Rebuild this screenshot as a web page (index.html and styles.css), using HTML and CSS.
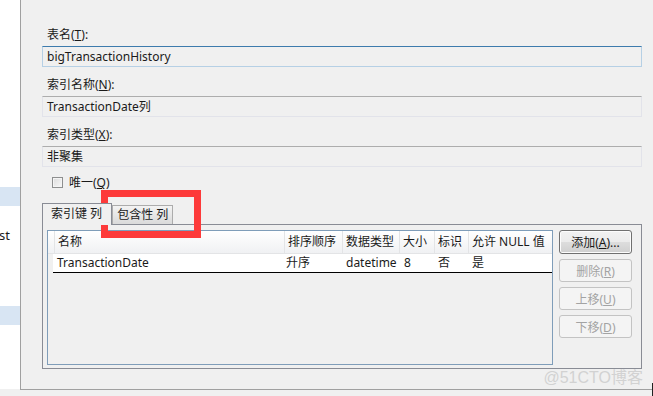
FILE: index.html
```html
<!DOCTYPE html>
<html lang="zh">
<head>
<meta charset="utf-8">
<title>索引属性</title>
<link rel="stylesheet" href="styles.css">
</head>
<body>
<div class="window">
  <div class="top">
    <aside class="side">
      <div class="side-hl hl1"></div>
      <div class="side-text">st</div>
      <div class="side-hl hl2"></div>
    </aside>
    <main class="main">
      <div class="label">表名(<u>T</u>):</div>
      <div class="field focus">bigTransactionHistory</div>
      <div class="label">索引名称(<u>N</u>):</div>
      <div class="field">TransactionDate列</div>
      <div class="label">索引类型(<u>X</u>):</div>
      <div class="field">非聚集</div>
      <div class="check-row"><span class="checkbox"></span><span>唯一(<u>Q</u>)</span></div>
      <div class="tabs">
        <div class="tab-strip">
          <div class="tab active">索引键 列</div>
          <div class="tab">包含性 列</div>
        </div>
        <div class="tab-panel">
          <div class="list">
            <div class="list-head">
              <div class="hcell c0"></div>
              <div class="hcell c1">名称</div>
              <div class="hcell c2">排序顺序</div>
              <div class="hcell c3">数据类型</div>
              <div class="hcell c4">大小</div>
              <div class="hcell c5">标识</div>
              <div class="hcell c6">允许 NULL 值</div>
            </div>
            <div class="list-row">
              <div class="cell c1">TransactionDate</div>
              <div class="cell c2">升序</div>
              <div class="cell c3">datetime</div>
              <div class="cell c4">8</div>
              <div class="cell c5">否</div>
              <div class="cell c6">是</div>
            </div>
          </div>
          <div class="buttons">
            <button class="btn">添加(<u>A</u>)...</button>
            <button class="btn disabled">删除(<u>R</u>)</button>
            <button class="btn disabled">上移(<u>U</u>)</button>
            <button class="btn disabled">下移(<u>D</u>)</button>
          </div>
        </div>
      </div>
      <div class="watermark">@51CTO博客</div>
    </main>
  </div>
  <div class="footer"></div>
  <div class="highlight-box"></div>
  <div class="edge"></div>
</div>
</body>
</html>
```

FILE: styles.css
```css
* { box-sizing: border-box; }
html, body { margin: 0; padding: 0; }
body {
  width: 653px;
  height: 396px;
  overflow: hidden;
  background: #f0f0f0;
  font-family: "Noto Sans", "Noto Sans CJK SC", sans-serif;
  font-size: 12px;
  color: #1a1a1a;
}
u { text-decoration: underline; text-underline-offset: 1px; }
.window { position: relative; width: 653px; height: 396px; display: flex; flex-direction: column; }
.top { display: flex; height: 389px; }
.side {
  width: 21px;
  background: #fff;
  border-right: 1px solid #a0a0a0;
  padding-top: 187px;
  overflow: hidden;
}
.side-hl { height: 19px; background: #d8e5f3; }
.side-text { height: 100px; padding-top: 21px; line-height: 16px; font-size: 13px; margin-left: -1px; }
.main {
  flex: 1;
  padding: 25px 11px 0 21px;
  display: flex;
  flex-direction: column;
}
.label { height: 20px; line-height: 20px; padding-left: 5px; margin-bottom: 1px; }
.field {
  height: 21px;
  line-height: 19px;
  padding-left: 4px;
  border: 1px solid #e2e3ea;
  border-top-color: #adadad;
  margin-bottom: 8px;
}
.field.focus { border-color: #b6d0e5; border-top-color: #3d7bad; }
.check-row { display: flex; align-items: center; height: 20px; margin-top: -3px; padding-left: 10px; gap: 6px; }
.checkbox {
  width: 11px; height: 11px;
  border: 1px solid #8e8f8f;
  background: linear-gradient(135deg, #dcdcdc, #f8f8f8);
  box-shadow: inset 0 0 0 1px #f4f4f4;
}
.tabs { margin-top: 11px; width: 600px; }
.tab-strip { display: flex; align-items: flex-end; height: 21px; }
.tab {
  height: 19px;
  line-height: 18px;
  padding: 0 4px;
  border: 1px solid #acacac;
  border-bottom: none;
  background: linear-gradient(#f3f3f3, #dadada);
}
.tab.active {
  height: 22px;
  padding: 0 9px 0 8px;
  line-height: 20px;
  border-color: #898c95;
  background: #f0f0f0;
  position: relative;
  z-index: 1;
  margin-bottom: -1px;
}
.tab-panel {
  height: 145px;
  border: 1px solid #898c95;
  padding: 5px 9px 4px 4px;
  display: flex;
  gap: 6px;
}
.list { width: 506px; height: 135px; border: 1px solid #7f9db9; }
.list-head { display: flex; height: 23px; }
.hcell {
  height: 23px;
  line-height: 22px;
  padding-left: 3px;
  background: linear-gradient(#ffffff, #f0f1f3);
  border-right: 1px solid #e3e4e6;
  border-bottom: 1px solid #e3e4e6;
  white-space: nowrap;
  overflow: hidden;
}
.c0 { width: 7px; }
.c1 { width: 230px; }
.c2 { width: 58px; }
.c3 { width: 57px; }
.c4 { width: 35px; }
.c5 { width: 34px; }
.c6 { width: 83px; border-right: none; }
.list-row {
  display: flex;
  margin-left: 5px;
  height: 19px;
  background: #fff;
  border-bottom: 1px solid #000;
}
.cell { line-height: 17px; white-space: nowrap; padding-left: 4px; }
.list-row .c1 { width: 232px; }
.list-row .c2 { padding-left: 1px; }
.list-row .c3 { padding-left: 3px; }
.list-row .c4 { padding-left: 4px; }
.list-row .c5 { padding-left: 3px; }
.list-row .c6 { padding-left: 3px; }
.buttons { display: flex; flex-direction: column; gap: 5px; }
.btn {
  width: 73px;
  height: 24px;
  font: inherit;
  color: #1a1a1a;
  border: 1px solid #707070;
  border-radius: 3px;
  background: linear-gradient(#f2f2f2 0%, #ebebeb 50%, #dddddd 51%, #cfcfcf 100%);
  box-shadow: inset 0 0 0 1px #fcfcfc;
  padding: 0;
}
.btn.disabled {
  height: 23px;
  color: #a3a3a3;
  border-color: #c3c3c3;
  background: #f4f4f4;
  box-shadow: none;
}
.watermark {
  align-self: flex-end;
  margin-top: 1px;
  margin-right: -1px;
  font-size: 16px;
  line-height: 16px;
  color: #d2d2d2;
  font-family: "Liberation Sans", "Noto Sans CJK SC", sans-serif;
}
.footer { flex: 1; border-top: 1px solid #a0a0a0; background: #f0f0f0; margin-left: 20px; }
.highlight-box {
  position: absolute;
  left: 101px; top: 190px;
  width: 100px; height: 48px;
  border: 7px solid #fd3a3a;
}
.edge { position: absolute; right: 0; top: 383px; width: 1px; height: 13px; background: #222; }
```
